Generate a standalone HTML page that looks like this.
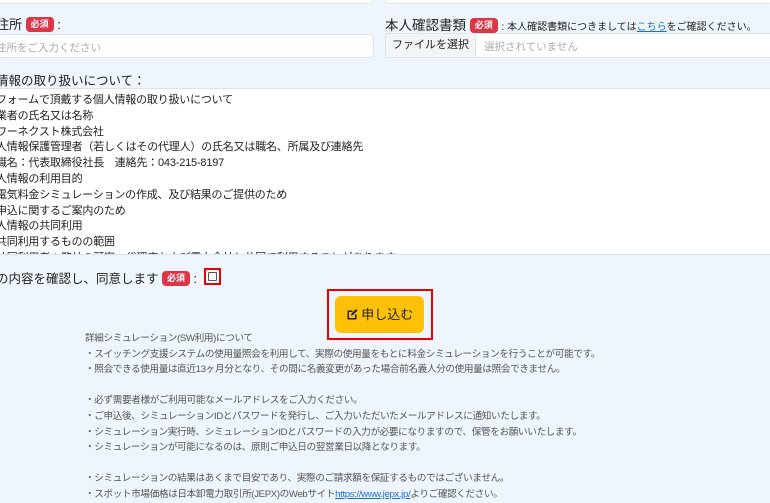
<!DOCTYPE html>
<html><head><meta charset="utf-8"><style>
*{margin:0;padding:0;box-sizing:border-box}
body{width:770px;height:500px;overflow:hidden;background:#eef5fc;font-family:"Liberation Sans","Noto Sans CJK JP",sans-serif;color:#222;position:relative}
.abs{position:absolute;white-space:nowrap}
.inp{position:absolute;background:#fff;border:1px solid #dde3ea;border-radius:4px}
.badge{display:inline-block;background:#dc3545;color:#fff;font-size:9px;font-weight:bold;padding:1px 5px;border-radius:4px;line-height:13px;vertical-align:2px}
.ph{color:#aaa;font-size:10.5px}
.box{position:absolute;left:0;top:88px;width:770px;height:167px;background:#fff;border-top:1px solid #dde3ea;border-bottom:1px solid #dde3ea;overflow:hidden}
.box div{font-size:11px;letter-spacing:-0.2px;line-height:15.8px;white-space:nowrap;color:#222}
.note{position:absolute;left:85px;top:331px;font-size:9.6px;letter-spacing:-0.35px;line-height:15.6px;color:#555;white-space:nowrap}
a{color:#1a6fd6}
</style></head><body>
<div class="inp" style="left:-2px;top:-20px;width:376px;height:24px"></div>
<div class="inp" style="left:385px;top:-20px;width:390px;height:24px"></div>
<div class="abs" style="left:-4px;top:14px;font-size:13px">住所 <span class="badge">必須</span> :</div>
<div class="inp" style="left:-2px;top:34px;width:376px;height:24px"><span class="ph abs" style="left:-3px;top:5px">住所をご入力ください</span></div>
<div class="abs" style="left:385px;top:14px;font-size:13.5px">本人確認書類 <span class="badge">必須</span> <span style="font-size:10px">: 本人確認書類につきましては<a href="#" style="text-decoration:underline">こちら</a>をご確認ください。</span></div>
<div class="inp" style="left:385px;top:33px;width:390px;height:25px;overflow:hidden"><div class="abs" style="left:0;top:0;height:23px;width:90px;background:#f2f4f6;border-right:1px solid #dde3ea;font-size:11px;line-height:23px;text-align:center">ファイルを選択</div><span class="ph abs" style="left:98px;top:5px">選択されていません</span></div>
<div class="abs" style="left:-4px;top:70px;font-size:12.5px">情報の取り扱いについて：</div>
<div class="box"><div style="padding:4px 0 0 0;margin-left:-4px">
<div>フォームで頂戴する個人情報の取り扱いについて</div>
<div>業者の氏名又は名称</div>
<div>ワーネクスト株式会社</div>
<div>人情報保護管理者（若しくはその代理人）の氏名又は職名、所属及び連絡先</div>
<div>職名：代表取締役社長　連絡先：043-215-8197</div>
<div>人情報の利用目的</div>
<div>電気料金シミュレーションの作成、及び結果のご提供のため</div>
<div>申込に関するご案内のため</div>
<div>人情報の共同利用</div>
<div>共同利用するものの範囲</div>
<div>共同利用者：弊社の顧客・代理店および電力会社と共同で利用することがあります</div>
</div></div>
<div class="abs" style="left:-4px;top:268px;font-size:12.5px">の内容を確認し、同意します <span class="badge">必須</span> :</div>
<div class="abs" style="left:204px;top:268px;width:17px;height:17px;border:2px solid #e00;background:#fff"><div style="position:absolute;left:2px;top:2px;width:9px;height:9px;border:1px solid #555;border-radius:1px"></div></div>
<div class="abs" style="left:327px;top:289px;width:106px;height:51px;border:2px solid #e00"></div>
<div class="abs" style="left:335px;top:296px;width:89px;height:37px;background:#ffc107;border-radius:6px;font-size:13px;line-height:37px;text-align:center;color:#222">
<svg width="12" height="12" viewBox="0 0 12 12" style="vertical-align:-1px"><path d="M1.5 2.5h5v1.5h-3.5v6h6v-3.5h1.5v5h-9z" fill="#222"/><path d="M5 7.5l0.3-1.8 4.7-4.7 1.5 1.5-4.7 4.7z" fill="#222"/></svg> 申し込む</div>
<div class="note">
<div>詳細シミュレーション(SW利用)について</div>
<div>・スイッチング支援システムの使用量照会を利用して、実際の使用量をもとに料金シミュレーションを行うことが可能です。</div>
<div>・照会できる使用量は直近13ヶ月分となり、その間に名義変更があった場合前名義人分の使用量は照会できません。</div>
<div>&nbsp;</div>
<div>・必ず需要者様がご利用可能なメールアドレスをご入力ください。</div>
<div>・ご申込後、シミュレーションIDとパスワードを発行し、ご入力いただいたメールアドレスに通知いたします。</div>
<div>・シミュレーション実行時、シミュレーションIDとパスワードの入力が必要になりますので、保管をお願いいたします。</div>
<div>・シミュレーションが可能になるのは、原則ご申込日の翌営業日以降となります。</div>
<div>&nbsp;</div>
<div>・シミュレーションの結果はあくまで目安であり、実際のご請求額を保証するものではございません。</div>
<div>・スポット市場価格は日本卸電力取引所(JEPX)のWebサイト<a href="#">https://www.jepx.jp/</a>よりご確認ください。</div>
</div>
</body></html>
